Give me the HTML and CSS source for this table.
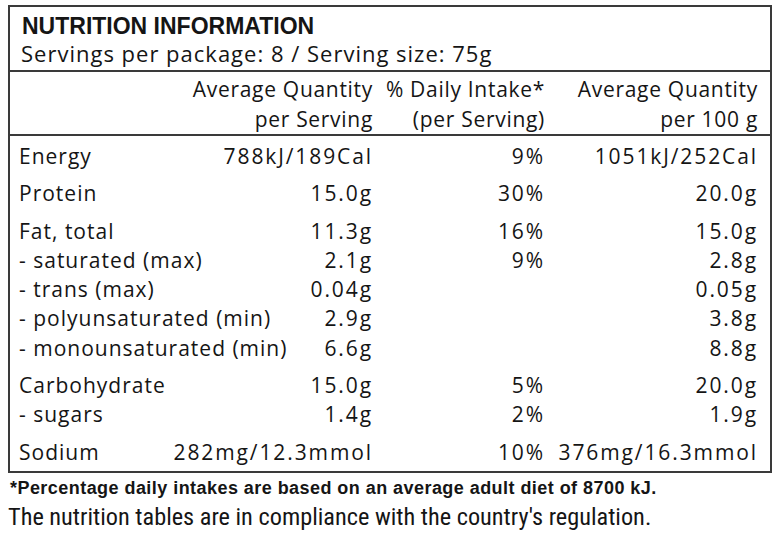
FILE: index.html
```html
<!DOCTYPE html>
<html lang="en">
<head>
<meta charset="utf-8">
<title>Nutrition Information</title>
<link rel="stylesheet" href="styles.css">
</head>
<body>
<div class="page">
  <section class="panel">
    <header class="panel-head">
      <h1 class="title">NUTRITION INFORMATION</h1>
      <p class="servings">Servings per package: 8 / Serving size: 75g</p>
    </header>
    <div class="row colhead">
      <div class="c1">Average Quantity<br>per Serving</div>
      <div class="c2">% Daily Intake*<br>(per Serving)</div>
      <div class="c3">Average Quantity<br>per 100 g</div>
    </div>
    <div class="rows">
      <div class="group">
        <div class="row"><div class="c1"><span class="label">Energy</span><span class="num">788kJ/189Cal</span></div><div class="c2 num">9%</div><div class="c3 num">1051kJ/252Cal</div></div>
      </div>
      <div class="group">
        <div class="row"><div class="c1"><span class="label">Protein</span><span class="num">15.0g</span></div><div class="c2 num">30%</div><div class="c3 num">20.0g</div></div>
      </div>
      <div class="group">
        <div class="row"><div class="c1"><span class="label">Fat, total</span><span class="num">11.3g</span></div><div class="c2 num">16%</div><div class="c3 num">15.0g</div></div>
        <div class="row"><div class="c1"><span class="label">- saturated (max)</span><span class="num">2.1g</span></div><div class="c2 num">9%</div><div class="c3 num">2.8g</div></div>
        <div class="row"><div class="c1"><span class="label">- trans (max)</span><span class="num">0.04g</span></div><div class="c2 num"></div><div class="c3 num">0.05g</div></div>
        <div class="row"><div class="c1"><span class="label">- polyunsaturated (min)</span><span class="num">2.9g</span></div><div class="c2 num"></div><div class="c3 num">3.8g</div></div>
        <div class="row"><div class="c1"><span class="label">- monounsaturated (min)</span><span class="num">6.6g</span></div><div class="c2 num"></div><div class="c3 num">8.8g</div></div>
      </div>
      <div class="group">
        <div class="row"><div class="c1"><span class="label">Carbohydrate</span><span class="num">15.0g</span></div><div class="c2 num">5%</div><div class="c3 num">20.0g</div></div>
        <div class="row"><div class="c1"><span class="label">- sugars</span><span class="num">1.4g</span></div><div class="c2 num">2%</div><div class="c3 num">1.9g</div></div>
      </div>
      <div class="group">
        <div class="row"><div class="c1"><span class="label">Sodium</span><span class="num">282mg/12.3mmol</span></div><div class="c2 num">10%</div><div class="c3 num">376mg/16.3mmol</div></div>
      </div>
    </div>
  </section>
  <p class="footnote">*Percentage daily intakes are based on an average adult diet of 8700 kJ.</p>
  <p class="note">The nutrition tables are in compliance with the country's regulation.</p>
</div>
</body>
</html>
```

FILE: styles.css
```css
html, body {
  margin: 0;
  padding: 0;
  background: #ffffff;
}

.page {
  padding: 5px 5px 0 8px;
  color: #151515;
  font-family: "Open Sans", "DejaVu Sans", sans-serif;
}

.panel {
  width: 764px;
  box-sizing: border-box;
  border: 2px solid #3a3a3a;
}

.panel-head {
  padding: 5px 12px 4px 12px;
  border-bottom: 2px solid #3a3a3a;
}

.title {
  margin: 0;
  font-family: "Liberation Sans", Arial, sans-serif;
  font-weight: 700;
  font-size: 23px;
  line-height: 29px;
}

.servings {
  margin: 0 0 0 -1px;
  font-size: 22px;
  line-height: 25px;
  letter-spacing: 1px;
}

.row {
  display: grid;
  grid-template-columns: 354px 172px 213px;
  padding: 0 12px 0 9px;
  font-size: 21px;
  line-height: 29.3px;
  letter-spacing: 1px;
}

.row .c1 {
  display: flex;
  justify-content: space-between;
  white-space: nowrap;
}

.row .c2,
.row .c3 {
  text-align: right;
  white-space: nowrap;
}

.row .num {
  letter-spacing: 1.9px;
}

.colhead {
  padding-top: 2px;
  padding-bottom: 0;
  border-bottom: 2px solid #3a3a3a;
  line-height: 30px;
  letter-spacing: 0.7px;
}

.colhead .c1 {
  display: block;
  text-align: right;
}

.rows {
  padding: 6px 0 4px 0;
}

.group + .group {
  margin-top: 8px;
}

.footnote {
  margin: 4px 0 0 2px;
  font-family: "Liberation Sans", Arial, sans-serif;
  font-weight: 700;
  font-size: 18px;
  line-height: 22px;
  letter-spacing: 0.45px;
}

.note {
  margin: 4px 0 0 0;
  font-family: "Liberation Sans Narrow", "Roboto Condensed", "Liberation Sans", sans-serif;
  font-size: 24.3px;
  line-height: 28px;
}
```
